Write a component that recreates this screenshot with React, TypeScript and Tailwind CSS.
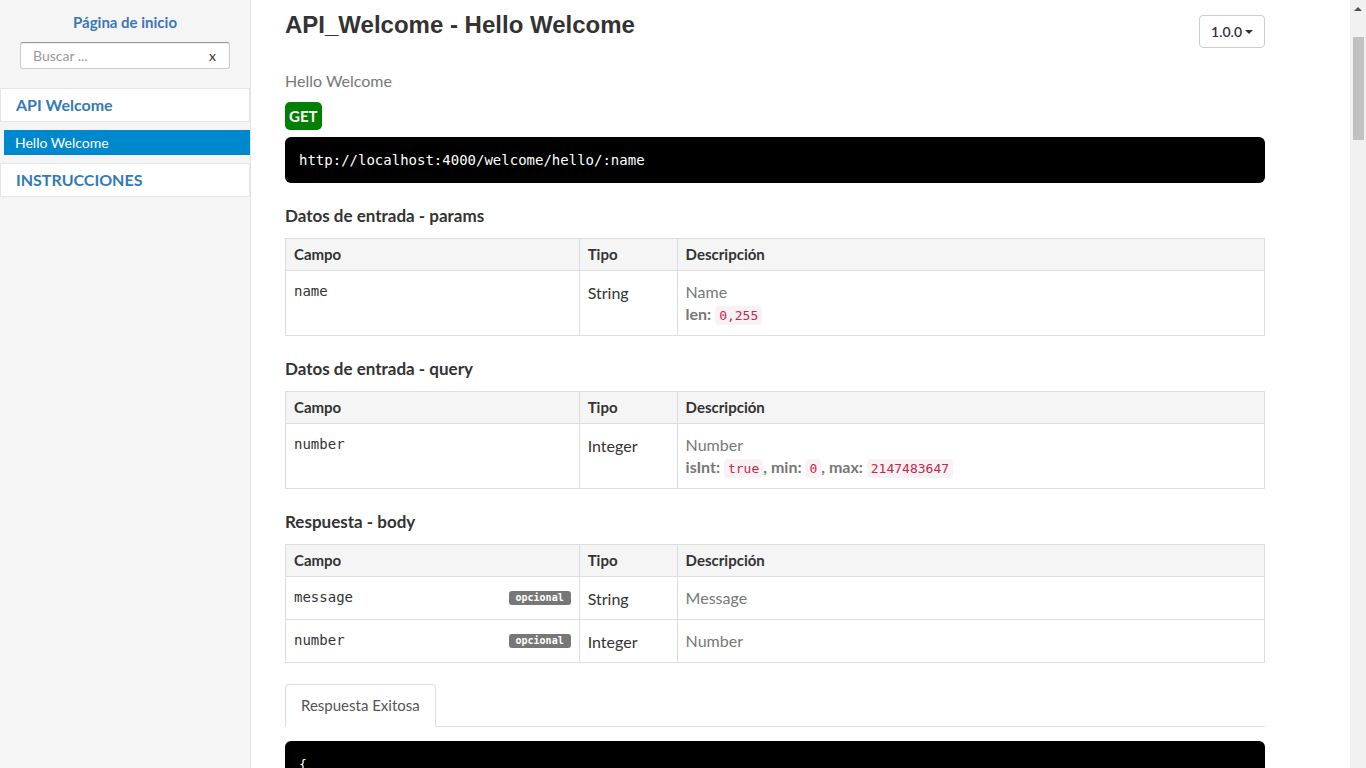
const sans = "font-['Lato','Noto_Sans',sans-serif]";
const mono = "font-['DejaVu_Sans_Mono','Liberation_Mono',monospace]";

type Row = {
  field: string;
  optional?: boolean;
  type: string;
  desc: string;
  extra?: React.ReactNode;
};

const Code = ({ children }: { children: React.ReactNode }) => (
  <code className={`${mono} font-normal text-[13px] text-[#c7254e] bg-[#f9f2f4] px-[4px] py-[2px] rounded-[4px]`}>
    {children}
  </code>
);

const ParamTable = ({ rows }: { rows: Row[] }) => (
  <table className="w-full border-collapse border border-[#ddd] text-[16px] text-[#333]">
    <thead>
      <tr className="bg-[#f5f5f5]">
        <th className="w-[30%] text-left font-bold text-[15px] px-[8px] h-[32px] border border-[#ddd]">Campo</th>
        <th className="w-[10%] text-left font-bold text-[15px] px-[8px] h-[32px] border border-[#ddd]">Tipo</th>
        <th className="text-left font-bold text-[15px] px-[8px] h-[32px] border border-[#ddd]">Descripción</th>
      </tr>
    </thead>
    <tbody>
      {rows.map((r) => (
        <tr key={r.field}>
          <td className="align-top px-[8px] pt-[10px] pb-[8px] border border-[#ddd]">
            <div className="flex items-center justify-between">
              <span className={`${mono} text-[14px] text-[#333]`}>{r.field}</span>
              {r.optional && (
                <span className={`${mono} text-[10px] font-bold text-white bg-[#777] rounded-[3px] px-[7px] leading-[14px]`}>
                  opcional
                </span>
              )}
            </div>
          </td>
          <td className="align-top px-[8px] pt-[10px] pb-[8px] border border-[#ddd]">{r.type}</td>
          <td className="align-top px-[8px] pt-[10px] pb-[8px] border border-[#ddd]">
            <div className="text-[#777] leading-[22px]">{r.desc}</div>
            {r.extra && <div className="text-[#777] font-bold leading-[22px]">{r.extra}</div>}
          </td>
        </tr>
      ))}
    </tbody>
  </table>
);

const SectionTitle = ({ children }: { children: React.ReactNode }) => (
  <h2 className="mt-[22px] mb-[11px] text-[17px] font-bold text-[#333] leading-[22px]">{children}</h2>
);

export default function App() {
  return (
    <div className={`${sans} flex h-[768px] bg-white`}>
      <aside className="w-[251px] shrink-0 bg-[#f5f5f5] border-r border-[#e5e5e5] h-full">
        <div className="pt-[10px] text-center">
          <a className="text-[15px] font-bold text-[#3a77b5]">Página de inicio</a>
        </div>
        <div className="px-[20px] pt-[8px] pb-[19px]">
          <div className="flex items-center h-[27px] bg-white border border-[#ccc] border-t-[#999] rounded-[3px] pl-[12px] pr-[13px] shadow-[inset_0_1px_1px_rgba(0,0,0,0.08)]">
            <span className="flex-1 text-[14px] text-[#999]">Buscar ...</span>
            <span className="text-[14px] text-[#333]">x</span>
          </div>
        </div>
        <div className="flex flex-col">
          <div className="bg-white border border-[#e5e5e5] h-[34px] flex items-center pl-[15px] text-[16px] font-bold text-[#337ab7]">
            API Welcome
          </div>
          <div className="mt-[8px] ml-[4px] h-[25px] bg-[#0088cc] flex items-center pl-[11px] text-[14px] text-white">
            Hello Welcome
          </div>
          <div className="mt-[8px] bg-white border border-[#e5e5e5] h-[34px] flex items-center pl-[15px] text-[16px] font-bold text-[#337ab7]">
            INSTRUCCIONES
          </div>
        </div>
      </aside>

      <main className="flex-1 h-full overflow-y-scroll">
        <div className="w-[980px] ml-[34px] pb-[40px]">
          <div className="flex items-start justify-between pt-[8px]">
            <h1 className="font-['Liberation_Sans',Arial,sans-serif] text-[24px] font-bold text-[#333] leading-[34px]">
              API_Welcome - Hello Welcome
            </h1>
            <button className="mt-[7px] h-[33px] px-[11px] border border-[#ccc] rounded-[4px] bg-white text-[14px] font-semibold text-[#333] flex items-center gap-[3px]">
              1.0.0
              <span className="inline-block w-0 h-0 border-l-[4px] border-r-[4px] border-t-[4px] border-l-transparent border-r-transparent border-t-[#333]" />
            </button>
          </div>

          <p className="mt-[22px] text-[16px] text-[#777] leading-[22px]">Hello Welcome</p>

          <div className="mt-[10px]">
            <span className="inline-flex items-center h-[28px] px-[4px] rounded-[5px] bg-[#008000] text-white font-bold text-[15px]">
              GET
            </span>
          </div>

          <pre className={`${mono} mt-[7px] h-[46px] bg-black text-white text-[14px] rounded-[6px] px-[14px] flex items-center`}>
            http://localhost:4000/welcome/hello/:name
          </pre>

          <SectionTitle>Datos de entrada - params</SectionTitle>
          <ParamTable
            rows={[
              {
                field: "name",
                type: "String",
                desc: "Name",
                extra: (
                  <>
                    len: <Code>0,255</Code>
                  </>
                ),
              },
            ]}
          />

          <SectionTitle>Datos de entrada - query</SectionTitle>
          <ParamTable
            rows={[
              {
                field: "number",
                type: "Integer",
                desc: "Number",
                extra: (
                  <>
                    isInt: <Code>true</Code>, min: <Code>0</Code>, max: <Code>2147483647</Code>
                  </>
                ),
              },
            ]}
          />

          <SectionTitle>Respuesta - body</SectionTitle>
          <ParamTable
            rows={[
              { field: "message", optional: true, type: "String", desc: "Message" },
              { field: "number", optional: true, type: "Integer", desc: "Number" },
            ]}
          />

          <div className="mt-[21px] flex border-b border-[#ddd]">
            <div className="-mb-px h-[43px] px-[15px] flex items-center border border-[#ddd] border-b-white rounded-t-[4px] bg-white text-[15px] text-[#555]">
              Respuesta Exitosa
            </div>
          </div>

          <pre className={`${mono} mt-[14px] bg-black text-white text-[13px] rounded-[6px] px-[14px] py-[14px] leading-[20px]`}>
{`{
    "message": "Hello Welcome",
    "number": 1
}`}
          </pre>
        </div>
      </main>

      {/* window scrollbar */}
      <div className="w-[16px] shrink-0 h-full bg-[#f1f1f1] flex flex-col items-center">
        <div className="mt-[7px] w-0 h-0 border-l-[4px] border-r-[4px] border-b-[4px] border-l-transparent border-r-transparent border-b-[#505050]" />
        <div className="mt-[26px] w-[11px] h-[103px] bg-[#c1c1c1]" />
      </div>
    </div>
  );
}
